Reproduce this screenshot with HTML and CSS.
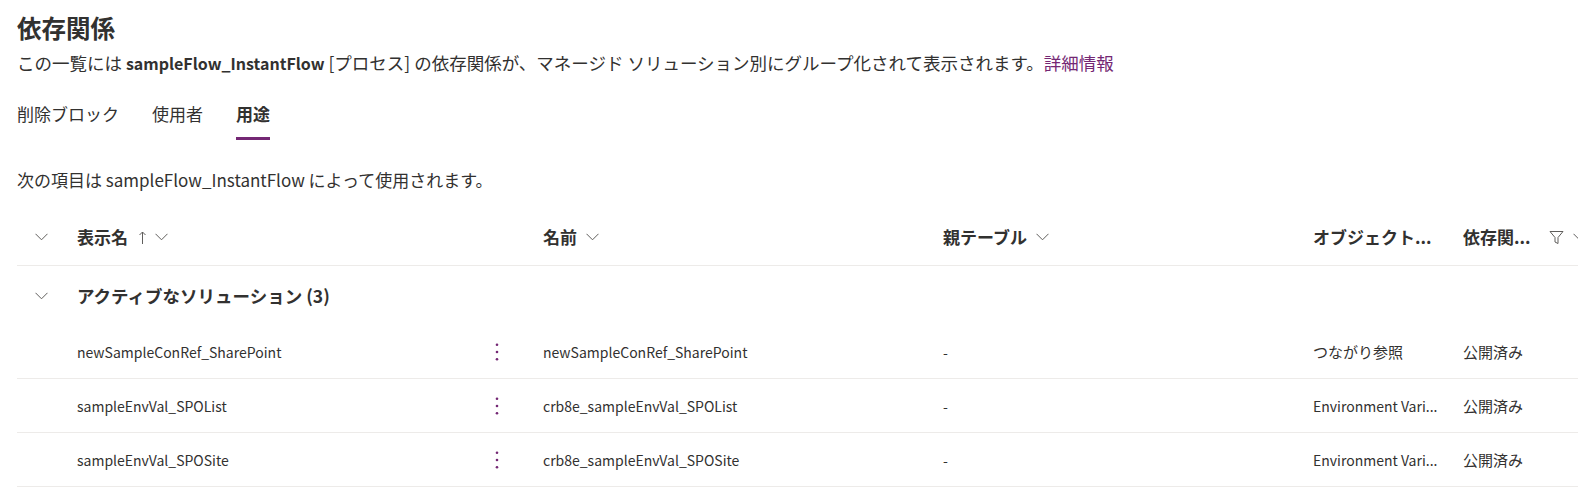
FILE: index.html
```html
<!DOCTYPE html>
<html lang="ja">
<head>
<meta charset="utf-8">
<title>依存関係</title>
<link rel="stylesheet" href="styles.css">
</head>
<body>
<div class="page">
  <h1 class="title">依存関係</h1>
  <p class="desc">この一覧には <b class="strong">sampleFlow_InstantFlow</b> [プロセス] の依存関係が、マネージド ソリューション別にグループ化されて表示されます。<a class="link" href="#">詳細情報</a></p>
  <nav class="tabs">
    <span class="tab">削除ブロック</span>
    <span class="tab">使用者</span>
    <span class="tab active">用途</span>
  </nav>
  <p class="intro">次の項目は sampleFlow_InstantFlow によって使用されます。</p>

  <div class="table">
    <div class="row head">
      <div class="cell toggle"><svg class="chev-s" width="13" height="8" viewBox="0 0 13 8"><path d="M0.5 0.8L6.5 6.8L12.5 0.8"/></svg></div>
      <div class="cell hcell">表示名<svg class="arrow" width="7" height="13" viewBox="0 0 7 13"><path d="M3.5 13V1M0.5 4L3.5 1L6.5 4"/></svg><svg class="chev" width="13" height="8" viewBox="0 0 13 8"><path d="M0.5 0.8L6.5 6.8L12.5 0.8"/></svg></div>
      <div class="cell hcell">名前<svg class="chev" width="13" height="8" viewBox="0 0 13 8"><path d="M0.5 0.8L6.5 6.8L12.5 0.8"/></svg></div>
      <div class="cell hcell">親テーブル<svg class="chev" width="13" height="8" viewBox="0 0 13 8"><path d="M0.5 0.8L6.5 6.8L12.5 0.8"/></svg></div>
      <div class="cell hcell">オブジェクト...</div>
      <div class="cell hcell">依存関...</div>
      <div class="cell fcell"><svg class="filter" width="15" height="15" viewBox="0 0 15 15"><path d="M1 1.5H14L9 7.5V13.5L6 12V7.5Z"/></svg><svg class="chev" width="13" height="8" viewBox="0 0 13 8"><path d="M0.5 0.8L6.5 6.8L12.5 0.8"/></svg></div>
    </div>

    <div class="row group">
      <div class="cell toggle"><svg class="chev-s" width="13" height="8" viewBox="0 0 13 8"><path d="M0.5 0.8L6.5 6.8L12.5 0.8"/></svg></div>
      <div class="cell gcell">アクティブなソリューション (3)</div>
    </div>

    <div class="row item">
      <div class="cell"></div>
      <div class="cell ncell"><span class="ntext">newSampleConRef_SharePoint</span><span class="more"><svg width="4" height="18" viewBox="0 0 4 18"><circle cx="2" cy="1.8" r="1.3"/><circle cx="2" cy="9" r="1.3"/><circle cx="2" cy="16.2" r="1.3"/></svg></span></div>
      <div class="cell">newSampleConRef_SharePoint</div>
      <div class="cell">-</div>
      <div class="cell ja">つながり参照</div>
      <div class="cell ja">公開済み</div>
      <div class="cell"></div>
    </div>

    <div class="row item">
      <div class="cell"></div>
      <div class="cell ncell"><span class="ntext">sampleEnvVal_SPOList</span><span class="more"><svg width="4" height="18" viewBox="0 0 4 18"><circle cx="2" cy="1.8" r="1.3"/><circle cx="2" cy="9" r="1.3"/><circle cx="2" cy="16.2" r="1.3"/></svg></span></div>
      <div class="cell">crb8e_sampleEnvVal_SPOList</div>
      <div class="cell">-</div>
      <div class="cell">Environment Vari...</div>
      <div class="cell ja">公開済み</div>
      <div class="cell"></div>
    </div>

    <div class="row item">
      <div class="cell"></div>
      <div class="cell ncell"><span class="ntext">sampleEnvVal_SPOSite</span><span class="more"><svg width="4" height="18" viewBox="0 0 4 18"><circle cx="2" cy="1.8" r="1.3"/><circle cx="2" cy="9" r="1.3"/><circle cx="2" cy="16.2" r="1.3"/></svg></span></div>
      <div class="cell">crb8e_sampleEnvVal_SPOSite</div>
      <div class="cell">-</div>
      <div class="cell">Environment Vari...</div>
      <div class="cell ja">公開済み</div>
      <div class="cell"></div>
    </div>
  </div>
</div>
</body>
</html>
```

FILE: styles.css
```css
html, body {
  margin: 0;
  padding: 0;
  background: #ffffff;
  overflow: hidden;
}

body {
  font-family: "Noto Sans CJK JP", "Noto Sans", sans-serif;
  color: #323130;
}

.page {
  padding: 12px 0 0 17px;
}

.title {
  margin: 0;
  font-size: 24.5px;
  line-height: 32px;
  font-weight: 700;
  color: #323130;
}

.desc {
  margin: 7px 0 0;
  font-size: 17.5px;
  line-height: 24px;
}

.strong {
  font-weight: 700;
  font-size: 16px;
}

.link {
  color: #742774;
  text-decoration: none;
}

.tabs {
  display: flex;
  gap: 33px;
  margin-top: 27px;
}

.tab {
  position: relative;
  font-size: 17px;
  line-height: 24px;
  padding-bottom: 14px;
  color: #323130;
}

.tab.active {
  font-weight: 700;
}

.tab.active::after {
  content: "";
  position: absolute;
  left: 0;
  right: 0;
  bottom: 0;
  height: 3px;
  background: #742774;
}

.intro {
  margin: 28px 0 0;
  font-size: 17px;
  line-height: 24px;
}

.table {
  margin-top: 17px;
}

.row {
  display: grid;
  grid-template-columns: 48px 466px 400px 370px 150px 89px 1fr;
  align-items: center;
}

.cell {
  padding-left: 12px;
  white-space: nowrap;
  overflow: hidden;
  display: flex;
  align-items: center;
}

.cell.toggle {
  padding-left: 0;
  justify-content: center;
}

.head {
  height: 56px;
  border-bottom: 1px solid #edebe9;
}

.hcell {
  font-size: 17px;
  font-weight: 700;
  line-height: 24px;
}

.fcell {
  padding-left: 9px;
  overflow: visible;
}

.group {
  height: 59px;
}

.gcell {
  grid-column: 2 / -1;
  font-size: 17.5px;
  font-weight: 700;
  line-height: 24px;
}

.item {
  height: 53px;
  border-bottom: 1px solid #edebe9;
  font-size: 14px;
  line-height: 20px;
}

.cell.ja {
  font-size: 15px;
}

.ncell {
  justify-content: space-between;
  padding-right: 18px;
}

.more {
  width: 32px;
  display: flex;
  justify-content: center;
  align-items: center;
}

.more circle {
  fill: #742774;
}

svg path {
  fill: none;
  stroke: #605e5c;
  stroke-width: 1;
}

.chev-s {
  display: block;
}

.arrow {
  margin-left: 11px;
}

.chev {
  margin-left: 9px;
  flex: none;
}

.filter {
  flex: none;
}
```
